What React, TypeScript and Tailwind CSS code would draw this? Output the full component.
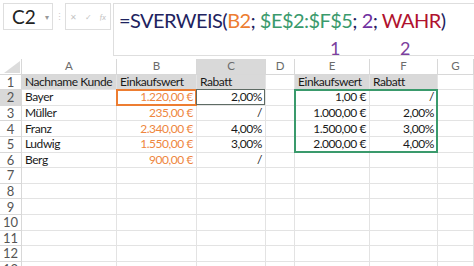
import React from "react";

type Cell = {
    text: string;
    align?: "left" | "right";
    tone?: "orange";
    fill?: boolean;
};

const cols = ["A", "B", "C", "D", "E", "F", "G"];

const rows: Record<number, Record<string, Cell>> = {
    1: {
        A: { text: "Nachname Kunde", fill: true },
        B: { text: "Einkaufswert", fill: true },
        C: { text: "Rabatt", fill: true },
        E: { text: "Einkaufswert", fill: true },
        F: { text: "Rabatt", fill: true },
    },
    2: {
        A: { text: "Bayer" },
        B: { text: "1.220,00 €", align: "right", tone: "orange" },
        C: { text: "2,00%", align: "right" },
        E: { text: "1,00 €", align: "right" },
        F: { text: "/", align: "right" },
    },
    3: {
        A: { text: "Müller" },
        B: { text: "235,00 €", align: "right", tone: "orange" },
        C: { text: "/", align: "right" },
        E: { text: "1.000,00 €", align: "right" },
        F: { text: "2,00%", align: "right" },
    },
    4: {
        A: { text: "Franz" },
        B: { text: "2.340,00 €", align: "right", tone: "orange" },
        C: { text: "4,00%", align: "right" },
        E: { text: "1.500,00 €", align: "right" },
        F: { text: "3,00%", align: "right" },
    },
    5: {
        A: { text: "Ludwig" },
        B: { text: "1.550,00 €", align: "right", tone: "orange" },
        C: { text: "3,00%", align: "right" },
        E: { text: "2.000,00 €", align: "right" },
        F: { text: "4,00%", align: "right" },
    },
    6: {
        A: { text: "Berg" },
        B: { text: "900,00 €", align: "right", tone: "orange" },
        C: { text: "/", align: "right" },
    },
};

const font = { fontFamily: "Lato, 'Noto Sans', sans-serif" };

function FormulaBar() {
    return (
        <div className="flex h-[56px] bg-white pt-[3px]">
            <div className="flex h-[27px] w-[113px] items-center">
                <div className="ml-[3px] flex h-full w-[50px] items-center justify-between border border-[#dedede] pl-[8px] pr-[3px]">
                    <span className="text-[19px] leading-none text-[#222]">C2</span>
                    <span className="text-[8px] leading-none text-[#999]">▾</span>
                </div>
                <span className="mx-auto text-[9px] leading-none text-[#ccc]">⋮</span>
                <div className="mr-[2px] flex h-full w-[46px] items-center justify-around border border-[#dedede] text-[8px] text-[#c4c4c4]">
                    <span>✕</span>
                    <span>✓</span>
                    <span className="italic">fx</span>
                </div>
            </div>
            <div className="relative flex-1 border-l border-t border-b border-[#dedede]">
                <div className="whitespace-nowrap pl-[5px] pt-[3px] text-[20px] leading-[26px] tracking-[-0.55px]">
                    <span className="text-[#1e2360]">=SVERWEIS(</span>
                    <span className="text-[#ed7d31]">B2</span>
                    <span className="text-[#1e2360]">; </span>
                    <span className="text-[#3a9a6c]">$E$2:$F$5</span>
                    <span className="text-[#1e2360]">; </span>
                    <span className="text-[#7030a0]">2</span>
                    <span className="text-[#1e2360]">; </span>
                    <span className="text-[#b0122e]">WAHR</span>
                    <span className="text-[#1e2360]">)</span>
                </div>
                <span className="absolute left-[216px] top-[35px] text-[18px] leading-none text-[#7b3f9e]">1</span>
                <span className="absolute left-[286px] top-[35px] text-[18px] leading-none text-[#7b3f9e]">2</span>
            </div>
        </div>
    );
}

function Sheet() {
    const rowCount = 13;
    return (
        <div className="mt-[3px] grid grid-cols-[22px_95px_80px_69px_29px_75px_68px_1fr] auto-rows-[15.6px] text-[12px] leading-[14px] tracking-[-0.45px]">
            <div
                className="relative border-b border-r border-[#d8d8d8] bg-white"
                style={{ gridRow: 1, gridColumn: 1 }}
            >
                <svg className="absolute bottom-[1px] right-[1px]" width="16" height="12" viewBox="0 0 16 12">
                    <polygon points="16,0 16,12 0,12" fill="#dcdcdc" />
                </svg>
            </div>
            {cols.map((c, i) => (
                <div
                    key={c}
                    className={`flex items-center justify-center border-b border-r border-[#d8d8d8] text-[11.5px] tracking-normal text-[#6b6b6b] ${c === "C" ? "bg-[#d9d9d9]" : "bg-white"}`}
                    style={{ gridRow: 1, gridColumn: i + 2 }}
                >
                    {c}
                </div>
            ))}
            {Array.from({ length: rowCount }, (_, r) => {
                const n = r + 1;
                return (
                    <React.Fragment key={n}>
                        <div
                            className={`flex items-center justify-center border-b border-r border-[#d8d8d8] text-[13px] tracking-normal text-[#555] ${n === 2 ? "bg-[#d9d9d9]" : "bg-white"}`}
                            style={{ gridRow: n + 1, gridColumn: 1 }}
                        >
                            {n}
                        </div>
                        {cols.map((c, i) => {
                            const cell = rows[n]?.[c];
                            const selected = n === 2 && c === "C";
                            const ref = n === 2 && c === "B";
                            return (
                                <div
                                    key={c}
                                    className={`relative flex items-center whitespace-nowrap border-b border-r border-[#e3e3e3] px-[3px] ${cell?.fill ? "bg-[#d9d9d9]" : "bg-white"} ${cell?.align === "right" ? "justify-end" : "justify-start"} ${cell?.tone === "orange" ? "text-[#ee8640]" : "text-[#1a1a1a]"}`}
                                    style={{ gridRow: n + 1, gridColumn: i + 2 }}
                                >
                                    {cell?.text}
                                    {ref && (
                                        <div className="pointer-events-none absolute -left-[1px] -top-[1px] -bottom-[1px] right-[-1px] border-2 border-[#ed7d31]" />
                                    )}
                                    {selected && (
                                        <div className="pointer-events-none absolute -left-[1px] -top-[1px] bottom-0 right-0 border border-[#5e6b64]" />
                                    )}
                                </div>
                            );
                        })}
                    </React.Fragment>
                );
            })}
            <div
                className="pointer-events-none z-10 -ml-[1px] -mt-[1px] border-2 border-[#3a9a6c]"
                style={{ gridRow: "3 / 7", gridColumn: "6 / 8" }}
            />
        </div>
    );
}

export default function App() {
    return (
        <div className="h-[266px] w-[474px] overflow-hidden bg-white" style={font}>
            <FormulaBar />
            <Sheet />
        </div>
    );
}
